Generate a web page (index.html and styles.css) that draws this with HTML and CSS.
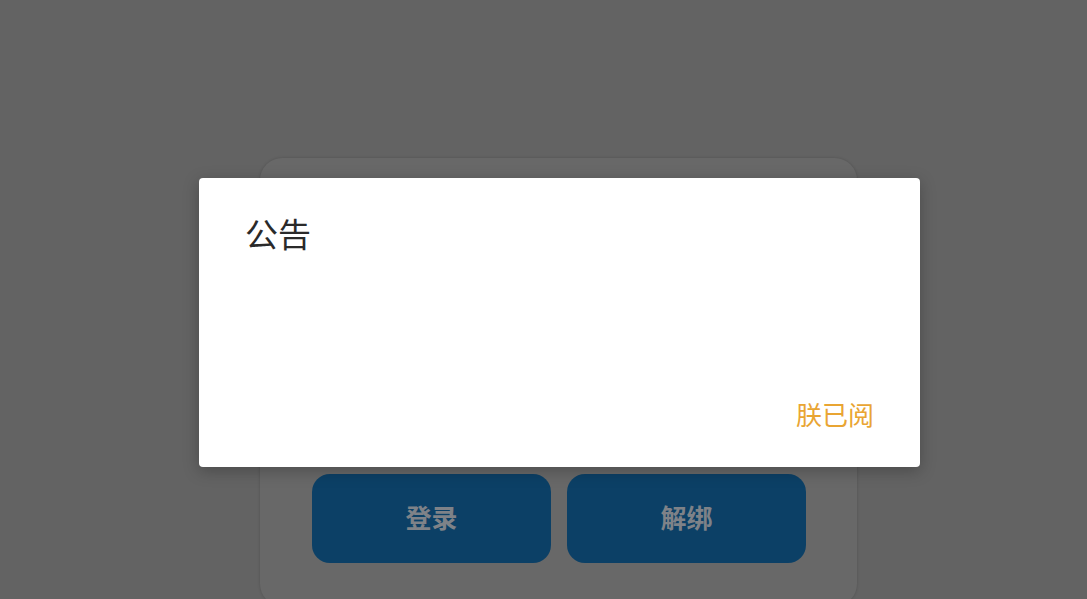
FILE: index.html
```html
<!DOCTYPE html>
<html lang="zh-CN">
<head>
<meta charset="utf-8">
<link rel="stylesheet" href="styles.css">
</head>
<body>
<div class="page">
  <div class="card">
    <div class="actions">
      <div class="btn">登录</div>
      <div class="btn">解绑</div>
    </div>
  </div>
</div>
<div class="dialog">
  <div class="dialog-title">公告</div>
  <div class="dialog-body"></div>
  <div class="dialog-footer">
    <span class="dialog-ok">朕已阅</span>
  </div>
</div>
</body>
</html>
```

FILE: styles.css
```css
html, body {
  margin: 0;
  padding: 0;
  height: 100%;
  overflow: hidden;
  background: #636363;
  font-family: "Noto Sans CJK SC", "Noto Sans", sans-serif;
}

.page {
  padding-top: 158px;
  padding-left: 260px;
}

.card {
  width: 597px;
  height: 448px;
  box-sizing: border-box;
  background: #686868;
  border-radius: 22px;
  box-shadow: 0 0 3px rgba(0, 0, 0, 0.18);
  padding: 316px 51px 0 52px;
}

.actions {
  display: flex;
  gap: 16px;
}

.btn {
  width: 239px;
  height: 89px;
  border-radius: 18px;
  background: #0c4066;
  color: #7e8288;
  font-size: 26px;
  font-weight: 700;
  line-height: 30px;
  padding-bottom: 4px;
  box-sizing: border-box;
  display: flex;
  align-items: center;
  justify-content: center;
}

.dialog {
  position: absolute;
  left: 199px;
  top: 178px;
  width: 721px;
  height: 289px;
  box-sizing: border-box;
  background: #ffffff;
  border-radius: 4px;
  box-shadow: 0 4px 16px rgba(0, 0, 0, 0.25);
  display: flex;
  flex-direction: column;
  padding: 37px 46px 38px 46px;
}

.dialog-title {
  font-size: 33px;
  line-height: 37px;
  color: #2a2a2a;
}

.dialog-body {
  flex: 1;
}

.dialog-footer {
  display: flex;
  justify-content: flex-end;
}

.dialog-ok {
  font-size: 26px;
  line-height: 30px;
  color: #e9a533;
}
```
